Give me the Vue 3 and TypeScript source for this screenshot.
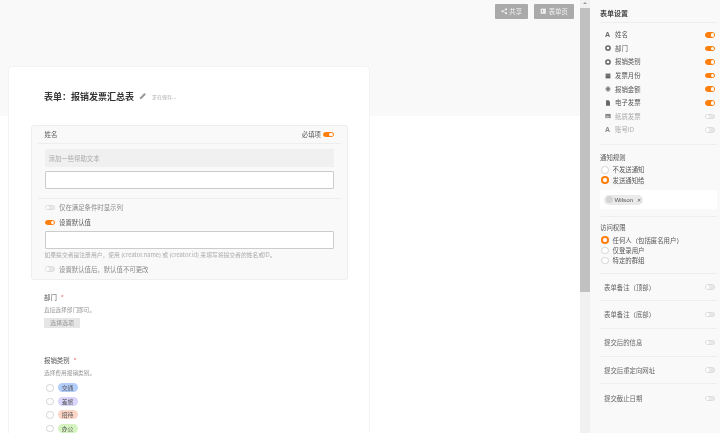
<script setup lang="ts">
const fields = [
  { icon: 'a', label: '姓名', on: true },
  { icon: 'ring', label: '部门', on: true },
  { icon: 'ring', label: '报销类别', on: true },
  { icon: 'cal', label: '发票月份', on: true },
  { icon: 'hash', label: '报销金额', on: true },
  { icon: 'doc', label: '电子发票', on: true },
  { icon: 'img', label: '纸质发票', on: false },
  { icon: 'a', label: '账号ID', on: false },
]
const options = [
  { label: '交通', bg: '#b3cdfb' },
  { label: '差旅', bg: '#d9d5fb' },
  { label: '招待', bg: '#fbd5c5' },
  { label: '办公', bg: '#d5f3c0' },
]
const extras = ['表单备注（顶部）', '表单备注（底部）', '提交后的信息', '提交后重定向网址', '提交截止日期']
</script>

<template>
  <div class="page">
    <main class="main">
      <div class="toolbar">
        <button class="tbtn share">
          <svg viewBox="0 0 10 10" class="ti"><circle cx="2.2" cy="5" r="1.7" /><circle cx="7.8" cy="2" r="1.7" /><circle cx="7.8" cy="8" r="1.7" /><path d="M2.2 5 7.8 2M2.2 5l5.6 3" stroke="#eee" fill="none" /></svg>
          共享
        </button>
        <button class="tbtn page-btn">
          <svg viewBox="0 0 10 10" class="ti"><path d="M1 1h8v8H1z" /><path d="M3 3h1.5v4H3z" fill="#aaa" /></svg>
          表单页
        </button>
      </div>

      <section class="card">
        <header class="head">
          <h1>表单：报销发票汇总表</h1>
          <svg viewBox="0 0 10 10" class="pencil"><path d="M1 9l.5-2.3L6.8 1.4l1.8 1.8-5.3 5.3z" /></svg>
          <span class="saving">正在保存...</span>
        </header>

        <div class="field-card">
          <div class="fc-top">
            <span class="fc-name">姓名</span>
            <span class="req">必填项</span>
            <span class="toggle on"></span>
          </div>
          <div class="help">添加一些帮助文本</div>
          <div class="input first"></div>
          <div class="fc-opts">
            <div class="opt"><span class="toggle"></span>仅在满足条件时显示列</div>
            <div class="opt dark"><span class="toggle on"></span>设置默认值</div>
            <div class="input"></div>
            <p class="hint">如果提交者是注册用户，使用 {creator.name} 或 {creator.id} 来填写将提交者的姓名或ID。</p>
            <div class="opt"><span class="toggle"></span>设置默认值后，默认值不可更改</div>
          </div>
        </div>

        <div class="q q1">
          <div class="q-title">部门<i>*</i></div>
          <div class="q-desc">直接选择部门即可。</div>
          <div class="pick">选择选项</div>
        </div>

        <div class="q q2">
          <div class="q-title">报销类别<i>*</i></div>
          <div class="q-desc">选择费用报销类别。</div>
          <div class="choice" v-for="o in options" :key="o.label">
            <span class="radio"></span>
            <span class="pill" :style="{ background: o.bg }">{{ o.label }}</span>
          </div>
        </div>
      </section>
    </main>

    <div class="scrollbar">
      <div class="arrow"></div>
      <div class="thumb"></div>
    </div>

    <aside class="side">
      <h2>表单设置</h2>
      <div class="s-fields">
        <div class="s-field" v-for="f in fields" :key="f.label" :class="{ off: !f.on }">
          <span class="s-icon">
            <b v-if="f.icon === 'a'">A</b>
            <svg v-else-if="f.icon === 'ring'" viewBox="0 0 8 8"><circle cx="4" cy="4" r="2.8" fill="none" stroke="currentColor" stroke-width="2" /></svg>
            <svg v-else-if="f.icon === 'cal'" viewBox="0 0 8 8"><path d="M.8.8h6.4v6.4H.8z" fill="currentColor" /><path d="M.8 3h6.4" stroke="#bbb" stroke-width=".5" /></svg>
            <svg v-else-if="f.icon === 'hash'" viewBox="0 0 8 8"><path d="M3 .6v6.8M5 .6v6.8M.8 3h6.4M.8 5h6.4" stroke="currentColor" stroke-width="1.1" fill="none" /></svg>
            <svg v-else-if="f.icon === 'doc'" viewBox="0 0 8 8"><path d="M1.4.4h3.6l1.6 1.8v5.4H1.4z" fill="currentColor" /></svg>
            <svg v-else viewBox="0 0 8 8"><path d="M.4 1.2h7.2v5.6H.4z" fill="currentColor" /><path d="M1.4 5.8l1.5-2.2 1.2 1.5.8-.9 1.2 1.6z" fill="#ddd" /></svg>
          </span>
          <span class="s-label">{{ f.label }}</span>
          <span class="toggle" :class="{ on: f.on }"></span>
        </div>
      </div>

      <div class="s-block notice">
        <div class="s-title">通知规则</div>
        <div class="s-radio"><span class="radio"></span>不发送通知</div>
        <div class="s-radio"><span class="radio on"></span>发送通知给</div>
        <div class="users">
          <span class="user"><span class="avatar"></span>Wilson<span class="x">✕</span></span>
        </div>
      </div>

      <div class="s-block access">
        <div class="s-title">访问权限</div>
        <div class="s-radio"><span class="radio on"></span>任何人（包括匿名用户）</div>
        <div class="s-radio"><span class="radio"></span>仅登录用户</div>
        <div class="s-radio"><span class="radio"></span>特定的群组</div>
      </div>

      <div class="extra" v-for="e in extras" :key="e">
        <span>{{ e }}</span>
        <span class="toggle"></span>
      </div>
    </aside>
  </div>
</template>

<style>
html, body { margin: 0; padding: 0; overflow: hidden; background: #fff; }
</style>

<style scoped>
.page {
  display: flex;
  width: 720px;
  height: 433px;
  overflow: hidden;
  font-family: "Noto Sans CJK SC", "Liberation Sans", sans-serif;
  color: #555;
  font-size: 6.4px;
  filter: blur(0.4px);
}
.main {
  width: 580px;
  flex: none;
  box-sizing: border-box;
  padding: 4px 6px 0 8px;
  background: linear-gradient(#f9f9f9 116px, #fff 116px);
  overflow: hidden;
}
.toolbar { display: flex; justify-content: flex-end; gap: 6px; height: 15px; }
.tbtn {
  display: flex;
  align-items: center;
  justify-content: center;
  gap: 2px;
  height: 15px;
  padding: 0;
  border: 0;
  border-radius: 1px;
  background: #aaa;
  color: #f0f0f0;
  font: inherit;
  font-size: 6.4px;
}
.share { width: 33px; }
.page-btn { width: 40px; }
.ti { width: 6.5px; height: 6.5px; fill: #eee; }
.card {
  width: 362px;
  height: 400px;
  margin-top: 47px;
  box-sizing: border-box;
  padding: 0 21.5px;
  background: #fff;
  border: 1px solid #f3f3f3;
  border-bottom: 0;
  border-radius: 4px 4px 0 0;
}
.head { display: flex; align-items: center; height: 58px; padding-left: 13.5px; box-sizing: border-box; }
.head h1 { margin: 0; font-size: 9px; font-weight: 700; color: #333; white-space: nowrap; }
.pencil { width: 8px; height: 8px; margin: 0 5px; fill: #999; }
.saving { font-size: 5px; color: #aaa; }
.field-card {
  width: 317px;
  height: 155px;
  box-sizing: border-box;
  padding: 0 6px;
  background: #f9f9f9;
  border: 1px solid #eee;
  border-radius: 3px;
}
.fc-top {
  display: flex;
  align-items: center;
  height: 17px;
  padding: 0 7px;
  border-bottom: 1px solid #eee;
}
.fc-name { flex: 1; }
.req { margin-right: 2px; }
.help {
  display: flex;
  align-items: center;
  height: 18px;
  margin: 5px 7px 0;
  padding: 0 4px;
  background: #f0f0f0;
  color: #aaa;
}
.input {
  height: 18px;
  margin: 4px 7px 0;
  box-sizing: border-box;
  background: #fff;
  border: 1px solid #ccc;
  border-radius: 1px;
}
.input.first { margin-bottom: 9px; }
.fc-opts { padding-top: 1px; border-top: 1px solid #eee; }
.opt {
  display: flex;
  align-items: center;
  gap: 4px;
  height: 15px;
  padding: 0 7px;
  color: #888;
}
.opt.dark { color: #555; }
.opt + .input { margin-top: 1px; }
.hint {
  margin: 2px 7px 0;
  font-size: 5.8px;
  line-height: 8px;
  color: #aaa;
  white-space: nowrap;
}
.hint + .opt { margin-top: 2.5px; }
.toggle {
  position: relative;
  display: inline-block;
  flex: none;
  width: 10.5px;
  height: 5.5px;
  box-sizing: border-box;
  border-radius: 3px;
  background: #e8e8e8;
  border: 1px solid #ddd;
}
.toggle::after {
  content: "";
  position: absolute;
  left: 0;
  top: 0;
  width: 3.5px;
  height: 3.5px;
  border-radius: 50%;
  background: #fff;
}
.toggle.on { background: #ff7f0e; border-color: #ff7f0e; }
.toggle.on::after { left: auto; right: 0; }
.q { padding-left: 13.5px; }
.q1 { margin-top: 12px; }
.q2 { margin-top: 27px; }
.q-title { height: 12px; line-height: 12px; color: #555; }
.q-title i { margin-left: 4px; color: #e55; font-style: normal; }
.q-desc { height: 12px; line-height: 12px; font-size: 5.7px; color: #999; }
.pick {
  width: 36px;
  height: 10px;
  margin-top: 2px;
  background: #e6e6e6;
  color: #999;
  text-align: center;
  line-height: 10px;
  font-size: 6px;
}
.choice { display: flex; align-items: center; gap: 4px; height: 13.6px; padding-left: 2px; }
.q-desc + .choice { margin-top: 2px; }
.radio {
  flex: none;
  width: 7.5px;
  height: 7.5px;
  box-sizing: border-box;
  border: 1px solid #d4d4d4;
  border-radius: 50%;
  background: #fff;
}
.radio.on { border: 2px solid #ff7f0e; }
.pill {
  width: 20px;
  height: 9px;
  border-radius: 5px;
  text-align: center;
  line-height: 9px;
  font-size: 5.8px;
  color: #555;
}
.scrollbar { width: 10px; flex: none; background: #f1f1f1; display: flex; flex-direction: column; align-items: stretch; }
.arrow { height: 8px; position: relative; }
.arrow::after {
  content: "";
  position: absolute;
  left: 3px;
  top: 2px;
  border-left: 2px solid transparent;
  border-right: 2px solid transparent;
  border-bottom: 2px solid #999;
}
.thumb { height: 284px; background: #c1c1c1; }
.side {
  flex: 1;
  box-sizing: border-box;
  padding: 0 3px 0 10px;
  background: #f9f9f9;
}
.side h2 {
  margin: 0;
  height: 23px;
  line-height: 26px;
  box-sizing: border-box;
  border-bottom: 1px solid #eee;
  font-size: 7px;
  font-weight: 700;
  color: #444;
}
.s-fields { padding: 5px 0 7px; border-bottom: 1px solid #eee; }
.s-field { display: flex; align-items: center; height: 13.6px; padding: 0 2px 0 4.5px; }
.s-icon { display: flex; align-items: center; justify-content: center; width: 6px; margin-right: 4.5px; color: #666; }
.s-icon svg { width: 6px; height: 6px; flex: none; }
.s-icon b { font-size: 7px; font-family: "Liberation Sans", sans-serif; }
.s-label { flex: 1; }
.s-field.off { color: #aaa; }
.s-field.off .s-icon { color: #888; }
.s-block { border-bottom: 1px solid #eee; }
.notice { padding: 7px 0 7px; }
.access { padding: 5px 0 7px; }
.s-title { height: 12px; line-height: 12px; margin-bottom: 1px; }
.s-radio { display: flex; align-items: center; gap: 4px; height: 10.2px; padding-left: 1px; }
.users {
  display: flex;
  align-items: center;
  height: 19px;
  margin-top: 5px;
  padding-left: 4px;
  background: #fff;
}
.user {
  display: flex;
  align-items: center;
  width: 39px;
  height: 10px;
  box-sizing: border-box;
  padding: 0 3px 0 1.5px;
  gap: 2px;
  border-radius: 5px;
  background: #eaeaea;
  font-family: "Liberation Sans", sans-serif;
  font-size: 6.2px;
}
.avatar { width: 7px; height: 7px; border-radius: 50%; background: #d4d4d4; flex: none; }
.x { font-size: 5px; margin-left: 1.5px; }
.extra {
  display: flex;
  align-items: center;
  justify-content: space-between;
  height: 27.7px;
  padding: 0 2px 0 4px;
  box-sizing: border-box;
  border-bottom: 1px solid #eee;
  color: #666;
}
.extra:last-child { border-bottom: 0; }
</style>
